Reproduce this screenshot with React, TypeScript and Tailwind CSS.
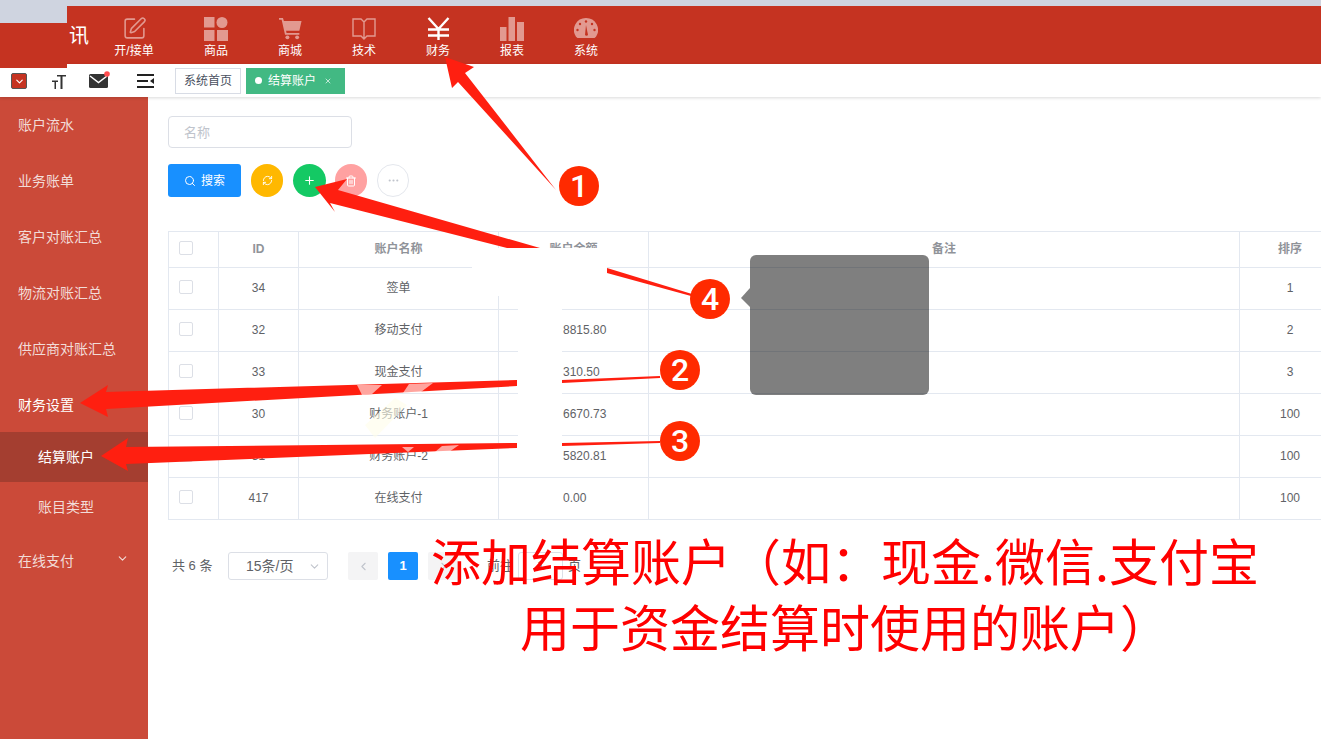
import { ChevronDown, ChevronLeft, ChevronRight, Ellipsis, Plus, RefreshCw, Search, SquarePen, Trash2, X } from "lucide-react";

const nav = [
  { label: "开/接单", icon: <SquarePen size={25} strokeWidth={1.5} className="opacity-50" />, cls: "mr-2" },
  {
    label: "商品",
    icon: (
      <svg width="24" height="24" viewBox="0 0 24 24" className="opacity-50" fill="white">
        <rect x="0" y="0" width="10.5" height="10.5" />
        <circle cx="18" cy="5.5" r="5.5" />
        <rect x="0" y="13" width="10.5" height="11" />
        <rect x="13" y="13" width="11" height="11" />
      </svg>
    ),
    cls: "",
  },
  {
    label: "商城",
    icon: (
      <svg width="23" height="23" viewBox="0 0 26 26" className="opacity-50" fill="white">
        <path d="M0 1h4.500l1 3.500H25.500l-2.500 11H8l.5 2.500H23v2H6.800L3 3H0z" />
        <circle cx="9.500" cy="23" r="2.200" />
        <circle cx="20.500" cy="23" r="2.200" />
      </svg>
    ),
    cls: "",
  },
  {
    label: "技术",
    icon: (
      <svg width="24" height="22" viewBox="0 0 24 22" className="opacity-50" fill="none" stroke="white" strokeWidth="1.400">
        <path d="M12 4 9 1H1v17h8l3 3 3-3h8V1h-8zM12 4v17" />
      </svg>
    ),
    cls: "",
  },
  {
    label: "财务",
    icon: (
      <svg width="23" height="23" viewBox="0 0 23 23" fill="none" stroke="white" strokeWidth="2.400">
        <path d="M1.500 1 11.500 12 21.500 1M11.500 12v11M1 12.500h21M1 18.500h21" />
      </svg>
    ),
    cls: "",
  },
  {
    label: "报表",
    icon: (
      <svg width="24" height="24" viewBox="0 0 24 24" className="opacity-50" fill="white">
        <rect x="0" y="10" width="6.500" height="14" />
        <rect x="8.500" y="0" width="6.500" height="24" />
        <rect x="17" y="5" width="7" height="19" />
      </svg>
    ),
    cls: "",
  },
  {
    label: "系统",
    icon: (
      <svg width="24" height="22" viewBox="0 0 24 22" className="opacity-50">
        <path fill="white" d="M12 0a12 12 0 0 1 10 18.700l-1.500 1.300H3.500L2 18.700A12 12 0 0 1 12 0z" />
        <g fill="#c53321">
          <circle cx="12" cy="3.500" r="1.200" />
          <circle cx="6" cy="6" r="1.200" />
          <circle cx="18" cy="6" r="1.200" />
          <circle cx="3.500" cy="12" r="1.200" />
          <circle cx="20.500" cy="12" r="1.200" />
          <path d="M11 17 12 7l2 10a1.800 1.800 0 0 1-3 0z" />
        </g>
      </svg>
    ),
    cls: "",
  },
];

const side = ["账户流水", "业务账单", "客户对账汇总", "物流对账汇总", "供应商对账汇总", "财务设置"];

const rows = [
  { id: "34", name: "签单", amount: "", sort: "1" },
  { id: "32", name: "移动支付", amount: "8815.80", sort: "2" },
  { id: "33", name: "现金支付", amount: "310.50", sort: "3" },
  { id: "30", name: "财务账户-1", amount: "6670.73", sort: "100" },
  { id: "31", name: "财务账户-2", amount: "5820.81", sort: "100" },
  { id: "417", name: "在线支付", amount: "0.00", sort: "100" },
];

const Check = () => <span className="block w-[14px] h-[14px] -mt-[2px] rounded-[2px] border border-[#dcdfe6] bg-white" />;

const Badge = ({ n, cls }: { n: string; cls: string }) => (
  <div className={`absolute w-[40px] h-[40px] rounded-full bg-[#ff2a00] text-white flex items-center justify-center text-[32px] font-medium font-['Roboto',sans-serif] ${cls}`}>
    {n}
  </div>
);

export default function App() {
  return (
    <div className="relative w-[1321px] h-[739px] overflow-hidden bg-white font-['Liberation_Sans','Noto_Sans_CJK_SC',sans-serif]">
      <div className="relative flex h-[64px]">
        <div className="relative z-10 w-[67px] h-[68px] flex flex-col shrink-0">
          <div className="h-[23px] bg-[#cfd4e0]" />
          <div className="flex-1 bg-[#c53321]" />
        </div>
        <div className="flex-1 flex flex-col">
          <div className="h-[6px] bg-[#cfd4e0]" />
          <div className="flex-1 bg-[#c53321] flex pl-[30px] items-start">
            {nav.map((n) => (
              <div key={n.label} className={`w-[74px] h-[58px] flex flex-col items-center text-white ${n.cls}`}>
                <div className="h-[33px] pt-[10px] flex items-center justify-center mt-[1px]">{n.icon}</div>
                <span className="text-[12px] leading-[14px] mt-[4px] whitespace-nowrap">{n.label}</span>
              </div>
            ))}
          </div>
        </div>
        <span className="absolute z-20 left-[69px] top-[25px] text-[20px] leading-[22px] text-white">讯</span>
      </div>

      <div className="relative h-[33px] flex items-center shadow-[0_1px_3px_rgba(0,0,0,0.15)] bg-white">
        <div className="w-[175px] shrink-0 relative h-full z-20">
          <span className="absolute left-[11px] top-[9px] w-[16px] h-[16px] rounded-[2px] bg-[#c53321] border border-[#555] flex items-center justify-center">
            <ChevronDown size={11} color="white" strokeWidth={2.5} />
          </span>
          <svg className="absolute left-[52px] top-[10px]" width="14" height="15" viewBox="0 0 14 15" fill="#333">
            <path d="M5 1h9v1.600h-3.500V15H8.500V2.600H5z" />
            <path d="M0 6.500h6V8H4v7H2.500V8H0z" />
          </svg>
          <svg className="absolute left-[89px] top-[7px]" width="22" height="18" viewBox="0 0 22 18">
            <rect x="0" y="3" width="19" height="14" rx="1.500" fill="#333" />
            <path d="M1 5 9.500 11.500 18 5" stroke="white" strokeWidth="1.500" fill="none" />
            <circle cx="18" cy="3" r="2.800" fill="#ff4d4f" />
          </svg>
          <svg className="absolute left-[137px] top-[10px]" width="17" height="14" viewBox="0 0 17 14" fill="#222">
            <rect x="0" y="0" width="17" height="2" />
            <rect x="0" y="6" width="11" height="2" />
            <rect x="0" y="12" width="17" height="2" />
            <path d="M17 4v6l-4-3z" />
          </svg>
        </div>
        <div className="flex gap-[5px]">
          <span className="w-[66px] h-[26px] border border-[#d8dce5] text-[12px] leading-[24px] text-center text-[#495060]">系统首页</span>
          <span className="w-[99px] h-[26px] bg-[#42b983] text-white text-[12px] flex items-center pl-[9px]">
            <span className="w-[7px] h-[7px] rounded-full bg-white mr-[6px]" />
            结算账户
            <X size={8} className="ml-[8px]" />
          </span>
        </div>
      </div>

      <div className="flex h-[642px]">
        <aside className="w-[148px] shrink-0 bg-[#cb4a39] text-[14px] text-[#f2dcd8]">
          {side.map((s, i) => (
            <div key={s} className={`h-[56px] leading-[56px] pl-[18px] ${i === 5 ? "text-white" : ""}`}>{s}</div>
          ))}
          <div className="h-[50px] -mt-[1px] leading-[50px] pl-[38px] bg-[#a43e30] text-white">结算账户</div>
          <div className="h-[50px] leading-[50px] pl-[38px]">账目类型</div>
          <div className="h-[56px] mt-[1px] pl-[18px] pr-[19px] flex items-center justify-between">
            在线支付
            <ChevronDown size={13} strokeWidth={2} className="-mt-[6px]" />
          </div>
        </aside>

        <main className="flex-1 min-w-0 pl-[20px] pt-[19px] overflow-hidden">
          <div className="w-[184px] h-[32px] border border-[#dcdfe6] rounded-[4px] pl-[15px] text-[13px] leading-[31px] text-[#c0c4cc]">名称</div>
          <div className="flex items-center mt-[16px] h-[33px]">
            <div className="w-[73px] h-[33px] bg-[#1890ff] rounded-[3px] text-white text-[12px] flex items-center justify-center gap-[5px]">
              <Search size={12} />
              搜索
            </div>
            <div className="ml-[10px] w-[32px] h-[33px] rounded-full bg-[#ffb800] flex items-center justify-center text-white"><RefreshCw size={11} /></div>
            <div className="ml-[10px] w-[33px] h-[33px] rounded-full bg-[#14c964] flex items-center justify-center text-white"><Plus size={13} /></div>
            <div className="ml-[9px] w-[32px] h-[33px] rounded-full bg-[#ffa1a1] flex items-center justify-center text-white"><Trash2 size={12} /></div>
            <div className="ml-[10px] w-[32px] h-[33px] rounded-full border border-[#e4e7ed] flex items-center justify-center text-[#c0c4cc]"><Ellipsis size={13} /></div>
          </div>

          <table className="mt-[34px] w-[1172px] table-fixed border-collapse text-[12px] text-center text-[#606266] border border-[#e3e8f0]">
            <colgroup>
              <col className="w-[50px]" />
              <col className="w-[80px]" />
              <col className="w-[200px]" />
              <col className="w-[150px]" />
              <col className="w-[591px]" />
              <col className="w-[101px]" />
            </colgroup>
            <thead>
              <tr className="h-[36px] text-[#909399] font-bold">
                <th className="border border-[#e3e8f0] pb-[2px] pl-[10px]"><Check /></th>
                <th className="border border-[#e3e8f0] pb-[2px]">ID</th>
                <th className="border border-[#e3e8f0] pb-[2px]">账户名称</th>
                <th className="border border-[#e3e8f0] pb-[2px]">账户余额</th>
                <th className="border border-[#e3e8f0] pb-[2px]">备注</th>
                <th className="border border-[#e3e8f0] pb-[2px]">排序</th>
              </tr>
            </thead>
            <tbody>
              {rows.map((r) => (
                <tr key={r.id} className="h-[42px]">
                  <td className="border border-[#e3e8f0] pb-[2px] pl-[10px]"><Check /></td>
                  <td className="border border-[#e3e8f0] pb-[2px]">{r.id}</td>
                  <td className="border border-[#e3e8f0] pb-[2px]">{r.name}</td>
                  <td className="border border-[#e3e8f0] pb-[2px] text-left pl-[64px]">{r.amount}</td>
                  <td className="border border-[#e3e8f0] pb-[2px]" />
                  <td className="border border-[#e3e8f0] pb-[2px]">{r.sort}</td>
                </tr>
              ))}
            </tbody>
          </table>

          <div className="flex items-center h-[28px] mt-[32px] text-[13px] text-[#606266]">
            <span className="ml-[4px] w-[56px]">共 6 条</span>
            <div className="w-[100px] h-[28px] border border-[#dcdfe6] rounded-[3px] flex items-center justify-between pl-[17px] pr-[6px] text-[14px] text-[#606266]">
              15条/页
              <ChevronDown size={13} color="#c0c4cc" />
            </div>
            <div className="ml-[20px] w-[30px] h-[28px] bg-[#f4f4f5] rounded-[2px] flex items-center justify-center text-[#c0c4cc]"><ChevronLeft size={13} /></div>
            <div className="ml-[10px] w-[30px] h-[28px] bg-[#1890ff] rounded-[2px] flex items-center justify-center text-white font-bold">1</div>
            <div className="ml-[10px] w-[30px] h-[28px] bg-[#f4f4f5] rounded-[2px] flex items-center justify-center text-[#c0c4cc]"><ChevronRight size={13} /></div>
            <span className="ml-[29px]">前往</span>
            <div className="ml-[5px] w-[45px] h-[28px] border border-[#dcdfe6] rounded-[3px] flex items-center justify-center">1</div>
            <span className="ml-[5px]">页</span>
          </div>
        </main>
      </div>

      <div className="absolute left-[472px] top-[248px] w-[135px] h-[48px] bg-white" />
      <div className="absolute left-[518px] top-[296px] w-[44px] h-[181px] bg-white" />
      <div className="absolute left-[750px] top-[255px] w-[179px] h-[140px] rounded-[6px] bg-black/50" />

      <svg className="absolute inset-0 pointer-events-none" width="1321" height="739" viewBox="0 0 1321 739">
        <path d="M741 298 750 288V307z" fill="#808080" />
        <polygon points="365,425 395,398 407,405 375,438" fill="#fffdea" fillOpacity="0.6" />
        <g fill="#ff1f10">
          <polygon points="445,57 474,67 465,73 556,190 458,82 452,88" />
          <polygon points="315,187 347,179 338,190 540,248 507,248 330,203 335,212" />
          <polygon points="607,268 692,294 691,296 607,273" />
          <polygon points="80,403 108,385 106,392 517,380 517,386 106,409 108,417" />
          <polygon points="562,380 660,376 660,378 562,383" />
          <polygon points="101,456 128,438 126,447 517,443 517,448 126,464 128,471" />
          <polygon points="562,443 660,441 660,443 562,446" />
        </g>
        <g fill="white" fillOpacity="0.6">
          <polygon points="357,385 382,385 372,394 362,395" />
          <polygon points="409,384 433,383 421,392 403,393" />
          <polygon points="402,447 414,447 408,452" />
          <polygon points="442,446 459,445 449,452 435,452" />
        </g>
      </svg>

      <Badge n="1" cls="left-[559px] top-[166px]" />
      <Badge n="2" cls="left-[660px] top-[350px]" />
      <Badge n="3" cls="left-[660px] top-[421px]" />
      <Badge n="4" cls="left-[690px] top-[279px]" />

      <div className="absolute left-[400px] top-[526px] w-[890px] text-center text-[#ff0000] text-[50px] leading-[66px] font-['Noto_Sans_CJK_SC',sans-serif]">
        <div>添加结算账户（如：现金.微信.支付宝</div>
        <div>用于资金结算时使用的账户）</div>
      </div>
    </div>
  );
}
